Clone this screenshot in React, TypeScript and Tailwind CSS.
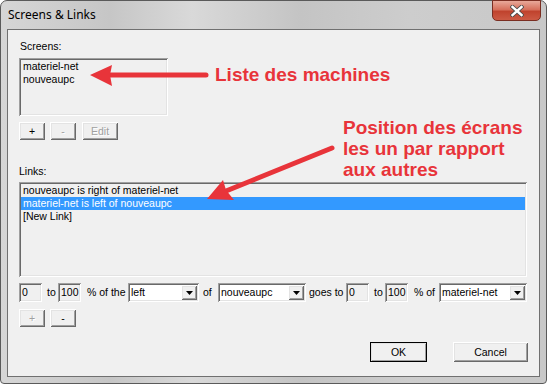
import React from 'react';

const sunken =
  'shadow-[inset_1px_1px_0_#a0a0a0,inset_-1px_-1px_0_#ffffff,inset_2px_2px_0_#696969,inset_-2px_-2px_0_#e3e3e3]';
const raised =
  'shadow-[inset_1px_1px_0_#ffffff,inset_-1px_-1px_0_#696969,inset_2px_2px_0_#e3e3e3,inset_-2px_-2px_0_#a0a0a0]';

const Btn: React.FC<{ label: string; width: string; disabled?: boolean; height?: string; isDefault?: boolean }> = ({
  label,
  width,
  disabled = false,
  height = 'h-[18px]',
  isDefault = false,
}) => (
  <div
    className={`${width} ${height} bg-[#f0f0f0] ${raised} flex items-center justify-center ${
      isDefault ? 'outline outline-1 outline-black -outline-offset-1' : ''
    }`}
  >
    <span className={disabled ? 'text-[#a0a0a0] [text-shadow:1px_1px_0_#ffffff]' : 'text-black'}>{label}</span>
  </div>
);

const Field: React.FC<{ value: string }> = ({ value }) => (
  <div className={`w-[23px] h-[19px] bg-[#f0f0f0] ${sunken} flex items-center pl-[3px]`}>{value}</div>
);

const Combo: React.FC<{ value: string; width: string }> = ({ value, width }) => (
  <div className={`${width} h-[19px] bg-white ${sunken} flex items-center justify-between pl-[3px] pr-[2px]`}>
    <span>{value}</span>
    <div className={`w-[16px] h-[15px] bg-[#f0f0f0] ${raised} flex items-center justify-center`}>
      <svg width="7" height="4" viewBox="0 0 7 4">
        <path d="M0 0h7L3.5 4z" fill="#000" />
      </svg>
    </div>
  </div>
);

const Gap: React.FC<{ text: string; width: string; pad: string }> = ({ text, width, pad }) => (
  <span className={`${width} ${pad} whitespace-nowrap`}>{text}</span>
);

export default function App() {
  const links = ['nouveaupc is right of materiel-net', 'materiel-net is left of nouveaupc', '[New Link]'];

  return (
    <div className="w-[547px] h-[384px] relative overflow-hidden bg-white">
      <div className="w-[547px] h-[384px] rounded-t-[7px] rounded-b-[4px] border border-[#5a5a5a] bg-[linear-gradient(90deg,#d6d6d6_0%,#c6c6c6_20%,#d9d9d9_35%,#c4c4c4_55%,#cdcdcd_75%,#c8c8c8_100%)] flex flex-col">
        {/* title bar */}
        <div className="h-[28px] flex items-center pl-[7px] relative">
          <span className="font-['Noto_Sans',sans-serif] text-[12px] text-black leading-none">Screens &amp; Links</span>
          <div className="absolute right-[5px] -top-px w-[49px] h-[21px] rounded-b-[5px] border border-[#7a2e22] bg-[linear-gradient(180deg,#e8a99a_0%,#d6705c_45%,#c0432e_55%,#cc5a44_100%)] flex items-center justify-center">
            <svg width="14" height="12" viewBox="0 0 14 12">
              <path d="M2.5 2l9 8M11.5 2l-9 8" stroke="#4a4a4a" strokeWidth="4.2" strokeLinecap="square" />
              <path d="M2.5 2l9 8M11.5 2l-9 8" stroke="#ffffff" strokeWidth="2.4" strokeLinecap="square" />
            </svg>
          </div>
        </div>

        {/* client area */}
        <div className="mx-[6px] h-[348px] border border-[#707070] bg-[#f0f0f0] pl-[11px] pr-[11px] flex flex-col font-['Liberation_Sans',Arial,sans-serif] text-[10.5px] leading-[13px] text-black">
          <div className="mt-[10px] h-[13px] pl-[1px]">Screens:</div>
          <div className={`mt-[5px] w-[149px] h-[58px] bg-[#f0f0f0] ${sunken} p-[2px]`}>
            <div className="pl-[2px] h-[13px]">materiel-net</div>
            <div className="pl-[2px] h-[13px]">nouveaupc</div>
          </div>
          <div className="mt-[6px] flex">
            <Btn label="+" width="w-[26px]" />
            <div className="ml-[5px]">
              <Btn label="-" width="w-[26px]" disabled />
            </div>
            <div className="ml-[6px]">
              <Btn label="Edit" width="w-[36px]" disabled />
            </div>
          </div>

          <div className="mt-[25px] h-[13px]">Links:</div>
          <div className={`mt-[4px] w-[508px] h-[95px] bg-[#f0f0f0] ${sunken} p-[2px]`}>
            {links.map((l, i) => (
              <div key={l} className={`pl-[2px] h-[13px] ${i === 1 ? 'bg-[#3399ff] text-white' : ''}`}>
                {l}
              </div>
            ))}
          </div>

          <div className="mt-[6px] flex items-center h-[19px]">
            <Field value="0" />
            <Gap text="to" width="w-[16px]" pad="pl-[5px]" />
            <Field value="100" />
            <Gap text="% of the" width="w-[47px]" pad="pl-[6px]" />
            <Combo value="left" width="w-[71px]" />
            <Gap text="of" width="w-[19px]" pad="pl-[4px]" />
            <Combo value="nouveaupc" width="w-[88px]" />
            <Gap text="goes to" width="w-[40px]" pad="pl-[3px]" />
            <Field value="0" />
            <Gap text="to" width="w-[16px]" pad="pl-[5px]" />
            <Field value="100" />
            <Gap text="% of" width="w-[31px]" pad="pl-[6px]" />
            <Combo value="materiel-net" width="w-[88px]" />
          </div>

          <div className="mt-[7px] flex">
            <Btn label="+" width="w-[26px]" disabled />
            <div className="ml-[5px]">
              <Btn label="-" width="w-[26px]" />
            </div>
          </div>

          <div className="mt-[15px] flex justify-end pr-[0px]">
            <Btn label="OK" width="w-[57px]" height="h-[20px]" isDefault />
            <div className="ml-[26px]">
              <Btn label="Cancel" width="w-[75px]" height="h-[20px]" />
            </div>
          </div>
        </div>
      </div>

      {/* annotations */}
      <svg className="absolute inset-0 pointer-events-none" width="547" height="384" viewBox="0 0 547 384">
        <path d="M206 75H108" stroke="#e8343a" strokeWidth="5" strokeLinecap="round" />
        <path d="M90 75L112 65L110 75L112 86Z" fill="#e8343a" />
        <path d="M332 148L226 191" stroke="#e8343a" strokeWidth="5" strokeLinecap="round" />
        <path d="M207 199L223 180L226 190L234 200Z" fill="#e8343a" />
      </svg>
      <div className="absolute left-[215px] top-[64px] font-['Liberation_Sans',Arial,sans-serif] font-bold text-[19px] leading-[21px] text-[#e8343a] whitespace-nowrap">
        Liste des machines
      </div>
      <div className="absolute left-[343px] top-[117px] font-['Liberation_Sans',Arial,sans-serif] font-bold text-[19px] leading-[21px] text-[#e8343a] whitespace-nowrap">
        Position des écrans
        <br />
        les un par rapport
        <br />
        aux autres
      </div>
    </div>
  );
}
